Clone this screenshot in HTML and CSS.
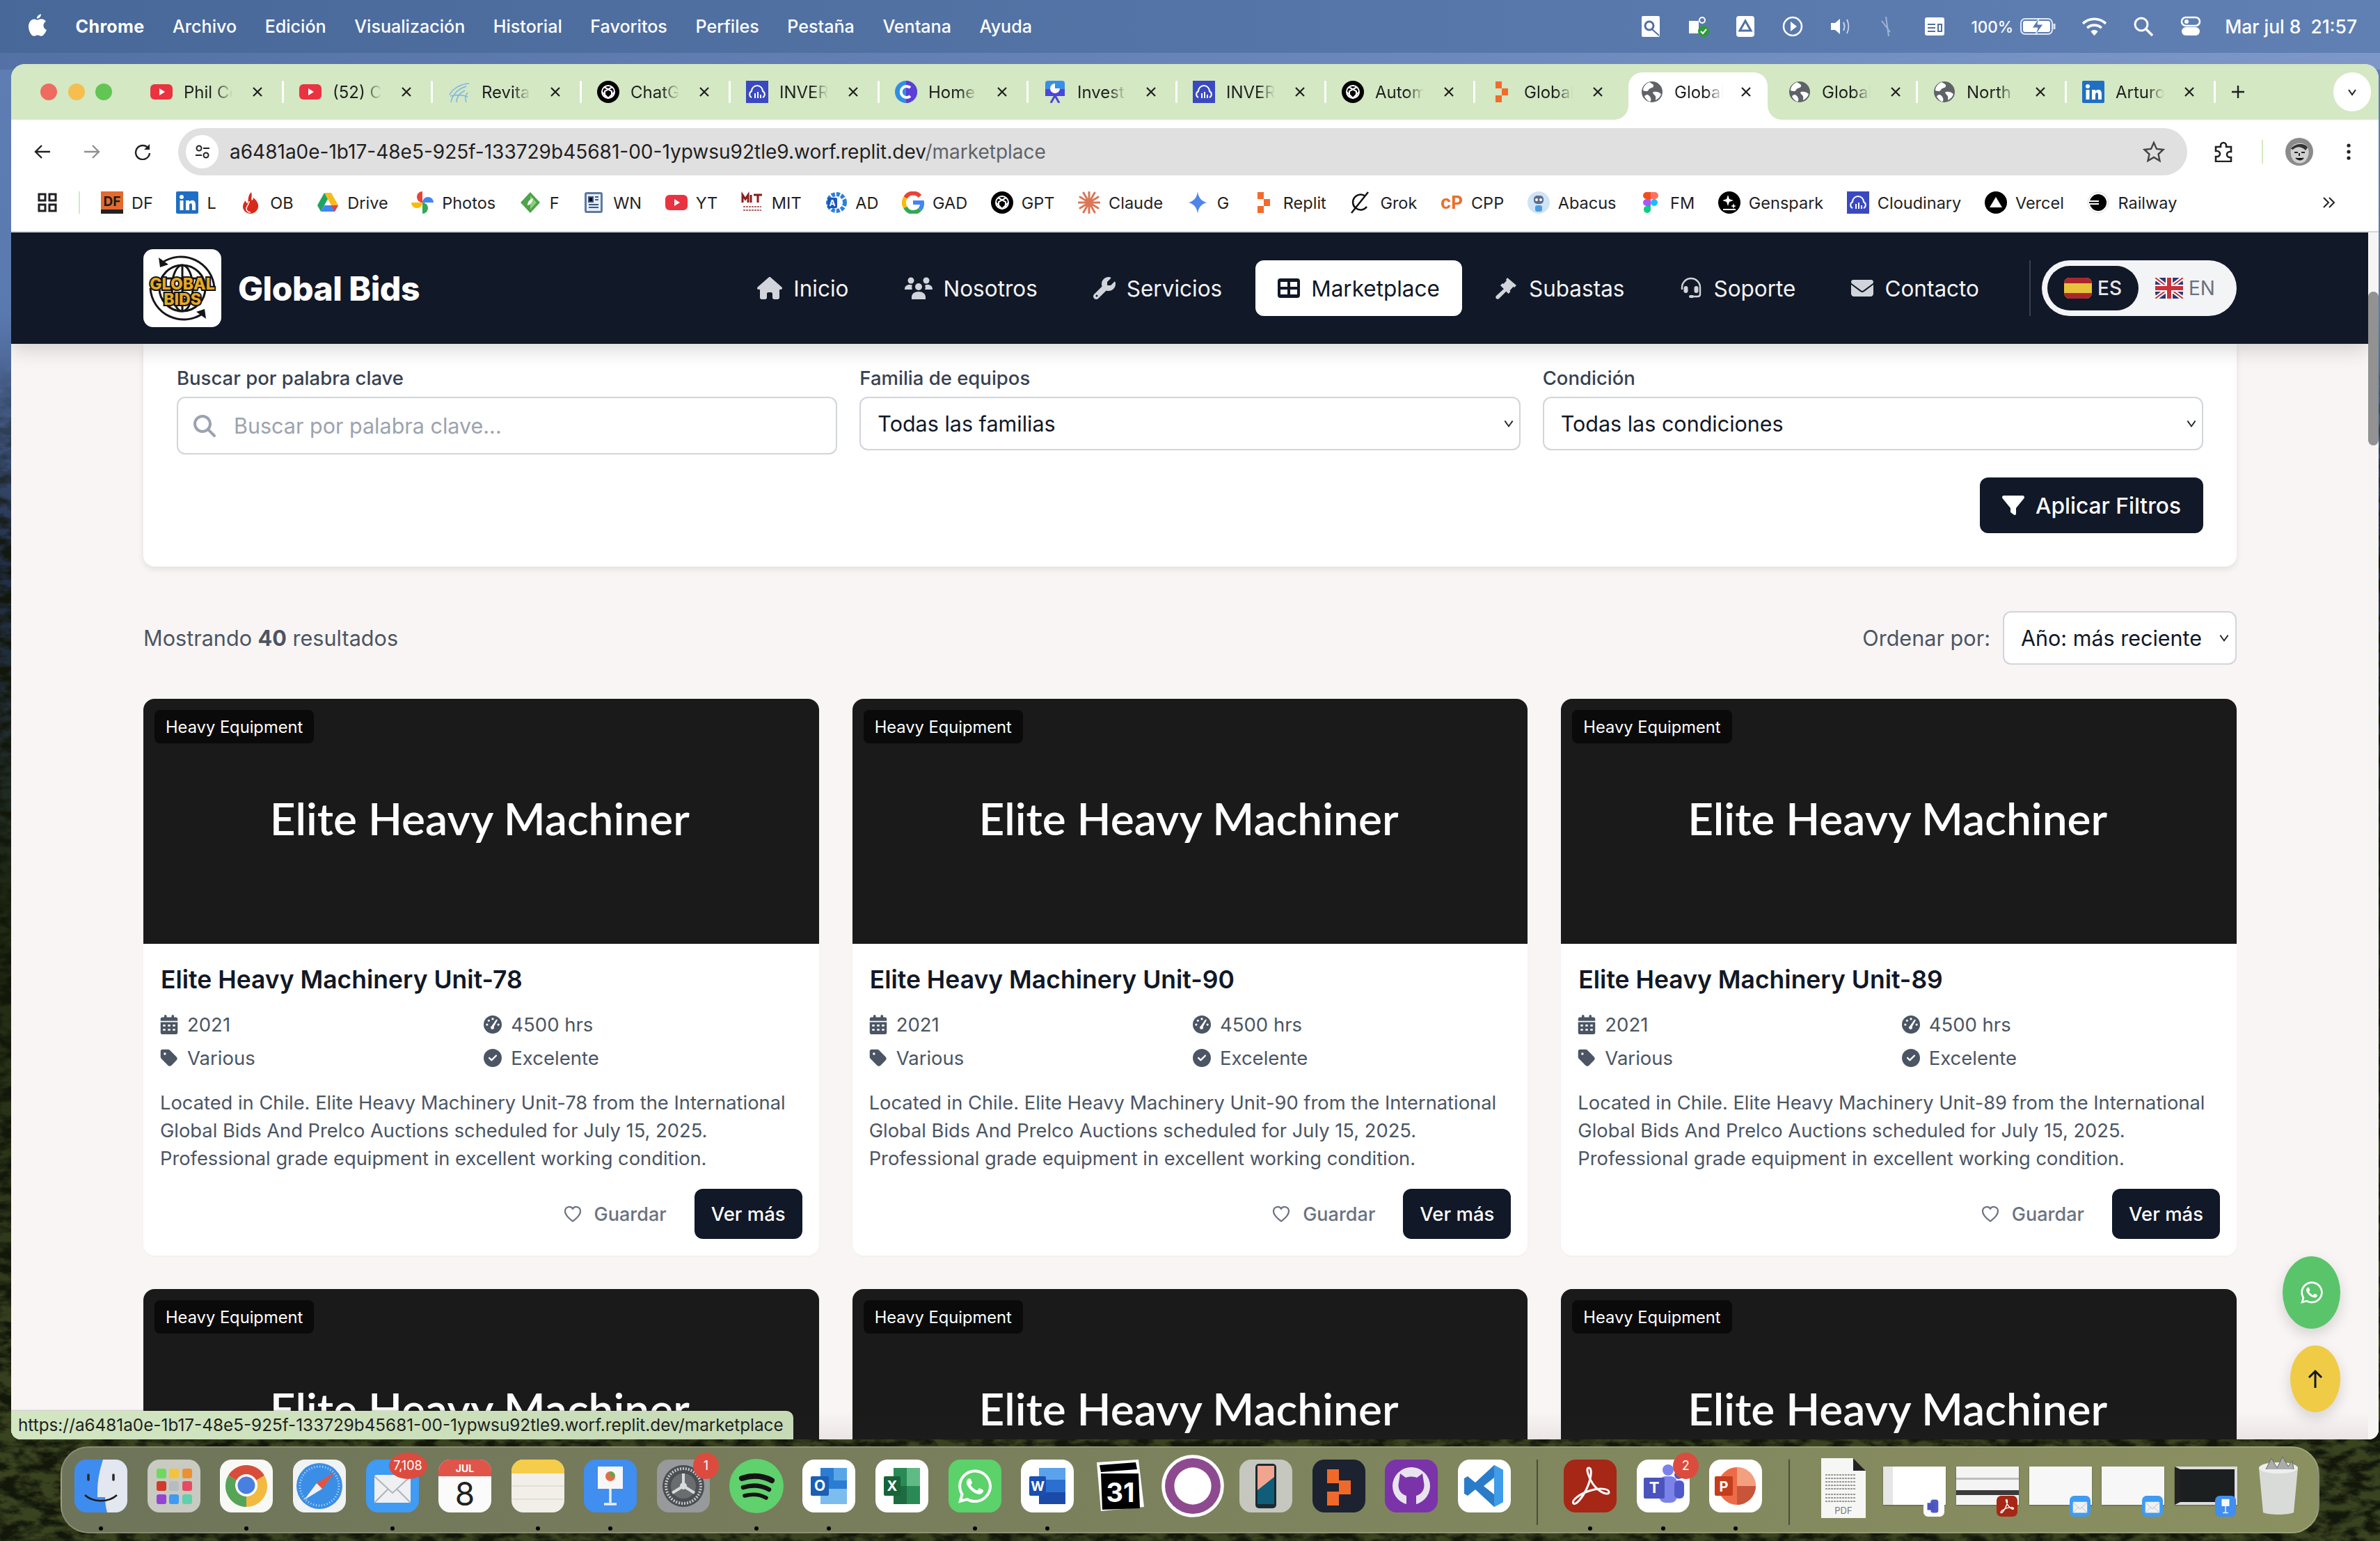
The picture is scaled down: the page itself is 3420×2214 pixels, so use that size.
FILE: index.html
```html
<!DOCTYPE html>
<html lang="es">
<head>
<meta charset="utf-8">
<title>Global Bids - Marketplace</title>
<link rel="stylesheet" href="styles.css">
</head>
<body>
<svg class="defs" width="0" height="0" aria-hidden="true">
<defs>
<filter id="foliage" x="0" y="0" width="100%" height="100%" color-interpolation-filters="sRGB"><feTurbulence type="fractalNoise" baseFrequency="0.035 0.07" numOctaves="5" seed="7"/><feColorMatrix values="0 0 0 0 .07  0 0 0 0 .09  0 0 0 0 .04  3.2 0 0 0 -1.15"/></filter>
<symbol id="i-yt" viewBox="0 0 32 32"><rect y="5" width="32" height="22" rx="6" fill="#ea3340"/><path d="M13 11l8 5-8 5z" fill="#fff"/></symbol>
<symbol id="i-gpt" viewBox="0 0 32 32"><circle cx="16" cy="16" r="16" fill="#000"/><g fill="none" stroke="#fff" stroke-width="2"><circle cx="16" cy="16" r="9"/><path d="M10 9l11 6v8M22 9L11 15v8M7 16l9 9 9-9"/></g></symbol>
<symbol id="i-cloud" viewBox="0 0 32 32"><rect width="32" height="32" fill="#3a49c1"/><path d="M8 24a5 5 0 0 1 0-9 8 8 0 0 1 16 0 5 5 0 0 1 0 9" fill="none" stroke="#fff" stroke-width="2"/><path d="M13 25v-7M17 25v-9M21 25v-5" stroke="#fff" stroke-width="2"/></symbol>
<symbol id="i-revit" viewBox="0 0 32 32"><path d="M2 20C8 10 18 5 30 4M4 31C6 20 14 12 26 8M12 31c0-8 4-13 12-17M26 31c-2-6-2-10 2-14M3 22c8-2 18-2 25 1" fill="none" stroke="#7eb4e8" stroke-width="1.5"/></symbol>
<symbol id="i-chome" viewBox="0 0 32 32"><circle cx="16" cy="16" r="16" fill="#2f8fe4"/><path d="M16 0a16 16 0 0 1 0 32z" fill="#5b3fd6"/><path d="M22 10a8 8 0 1 0 0 12" fill="none" stroke="#fff" stroke-width="4"/></symbol>
<symbol id="i-invest" viewBox="0 0 32 32"><rect x="2" width="28" height="22" rx="4" fill="#3b8ee8"/><rect x="2" y="12" width="28" height="10" fill="#4b46d8"/><path d="M16 4a7 7 0 1 0 7 7h-7z" fill="#fff"/><path d="M10 32l5-9h2l5 9" fill="none" stroke="#4b46d8" stroke-width="3"/></symbol>
<symbol id="i-globe" viewBox="0 0 32 32"><circle cx="16" cy="16" r="15" fill="#5f6368"/><path d="M12 2c3 2 7 3 6 6s-6 2-7 5-5 2-8 1c0-5 4-10 9-12zM18 16c4-1 8 0 11 3-1 4-4 7-8 9 0-3 1-5-1-7s-4-4-2-5zM8 20c3 0 5 2 6 5s0 4-1 5c-4-1-7-5-8-8z" fill="#fff"/></symbol>
<symbol id="i-replit" viewBox="0 0 32 32"><path d="M7 1h9v10H7zM16 11h9v10h-9zM7 21h9v10H7z" fill="#f26b2c"/></symbol>
<symbol id="i-li" viewBox="0 0 32 32"><rect width="32" height="32" rx="2" fill="#1f6fc4"/><circle cx="8" cy="8" r="3" fill="#fff"/><path d="M5.500 13h5v14h-5zM14 13h5v2c3-4 9-3 9 4v8h-5v-7c0-4-4-4-4 0v7h-5z" fill="#fff"/></symbol>
<symbol id="i-df" viewBox="0 0 32 32"><rect width="32" height="32" fill="#e46a2e"/><rect y="26" width="32" height="6" fill="#222"/><text x="16" y="21" text-anchor="middle" class="svg-t" font-size="19" fill="#1a1a1a">DF</text></symbol>
<symbol id="i-ob" viewBox="0 0 32 32"><path d="M17 1c2 7-1 9 1 12 2-1 2-3 2-4 5 4 8 9 7 14-1 5-6 9-11 9S5 28 5 22c0-4 2-7 4-9 0 2 1 4 3 4 1-6 0-11 5-16z" fill="#d8291d"/><path d="M14 14c0 5-4 7-4 11 0 3 3 5 6 5" fill="none" stroke="#fff" stroke-width="1.500"/></symbol>
<symbol id="i-drive" viewBox="0 0 32 32"><path d="M11 2h10l10 18h-10z" fill="#f6bc1d"/><path d="M11 2L1 20l5 9 10-18z" fill="#1da462"/><path d="M6 29h20l5-9H11z" fill="#4285f4"/><path d="M21 20l5 9 5-9z" fill="#ea4335"/></symbol>
<symbol id="i-photos" viewBox="0 0 32 32"><path d="M16 16A8 8 0 0 1 16 0z" fill="#ea4335"/><path d="M16 16a8 8 0 0 1 16 0z" fill="#4285f4"/><path d="M16 16a8 8 0 0 1 0 16z" fill="#34a853"/><path d="M16 16a8 8 0 0 1-16 0z" fill="#fbbc04"/></symbol>
<symbol id="i-f" viewBox="0 0 32 32"><path d="M16 1L30 16 16 31 2 16z" fill="#4da34a"/><path d="M16 6l9 10-9 10" fill="#8bcf78"/><path d="M12 20c0-6 4-9 8-10-1 5-3 9-8 10z" fill="#fff"/></symbol>
<symbol id="i-wn" viewBox="0 0 32 32"><rect x="3" y="1" width="26" height="30" rx="3" fill="#5d7ba3"/><rect x="6" y="4" width="20" height="24" fill="#e8eef5"/><path d="M9 8h6v7H9zM18 8h5M18 12h5M9 19h14M9 23h14" stroke="#3d5a82" stroke-width="2"/></symbol>
<symbol id="i-mit" viewBox="0 0 32 32"><path d="M2 16V5l4 6 4-6v11M14 5v11M18 5h12M24 5v11" fill="none" stroke="#8a1c1c" stroke-width="3"/><path d="M3 22h26M3 27h26" stroke="#b06a6a" stroke-width="2" stroke-dasharray="3 1"/></symbol>
<symbol id="i-ad" viewBox="0 0 32 32"><circle cx="17" cy="16" r="12" fill="none" stroke="#2f7fd9" stroke-width="6" stroke-dasharray="5 2"/><rect x="4" y="9" width="14" height="15" rx="2" fill="#1d56b8"/><text x="11" y="21" text-anchor="middle" class="svg-t" font-size="12" fill="#fff">A</text></symbol>
<symbol id="i-g" viewBox="0 0 32 32"><g fill="none" stroke-width="6"><path d="M26 7A13 13 0 0 0 5 9" stroke="#ea4335"/><path d="M5 9a13 13 0 0 0 0 14" stroke="#fbbc04"/><path d="M5 23a13 13 0 0 0 21 3" stroke="#34a853"/><path d="M26 26a13 13 0 0 0 3-10H16" stroke="#4285f4"/></g></symbol>
<symbol id="i-claude" viewBox="0 0 32 32"><g stroke="#d97757" stroke-width="3" stroke-linecap="round"><path d="M16 1v30M3 8l26 16M29 8L3 24M8 2l16 28M24 2L8 30M1 16h30"/></g></symbol>
<symbol id="i-gem" viewBox="0 0 32 32"><path d="M16 0c1 9 6 15 14 16-8 1-13 7-14 16-1-9-6-15-14-16 8-1 13-7 14-16z" fill="#4c86e8"/></symbol>
<symbol id="i-grok" viewBox="0 0 32 32"><path d="M23 7a11 11 0 1 0 2 15M27 1L3 31" fill="none" stroke="#111" stroke-width="2.500"/></symbol>
<symbol id="i-cpp" viewBox="0 0 32 32"><text x="16" y="25" text-anchor="middle" class="svg-t" font-size="26" fill="#e8702a">cP</text></symbol>
<symbol id="i-abacus" viewBox="0 0 32 32"><circle cx="16" cy="16" r="16" fill="#cfe3f7"/><rect x="9" y="6" width="14" height="12" rx="5" fill="#5b6b8c"/><circle cx="13" cy="12" r="2" fill="#fff"/><circle cx="19" cy="12" r="2" fill="#fff"/><rect x="11" y="20" width="10" height="9" rx="3" fill="#4b9ce2"/></symbol>
<symbol id="i-figma" viewBox="0 0 32 32"><path d="M10 1h6v10h-6a5 5 0 0 1 0-10z" fill="#f24e1e"/><path d="M16 1h6a5 5 0 0 1 0 10h-6z" fill="#ff7262"/><path d="M10 11h6v10h-6a5 5 0 0 1 0-10z" fill="#a259ff"/><circle cx="21" cy="16" r="5" fill="#1abcfe"/><path d="M10 21h6v5a5 5 0 1 1-6-5z" fill="#0acf83"/></symbol>
<symbol id="i-spark" viewBox="0 0 32 32"><circle cx="16" cy="16" r="16" fill="#000"/><path d="M14 5l2 6 6 2-6 2-2 6-2-6-6-2 6-2zM22 17l1 3 3 1-3 1-1 3-1-3-3-1 3-1z" fill="#fff"/><rect x="7" y="25" width="18" height="2" fill="#fff"/></symbol>
<symbol id="i-vercel" viewBox="0 0 32 32"><circle cx="16" cy="16" r="16" fill="#000"/><path d="M16 8l9 15H7z" fill="#fff"/></symbol>
<symbol id="i-rail" viewBox="0 0 32 32"><circle cx="16" cy="16" r="15" fill="#fff" stroke="#ddd"/><path d="M16 4a12 12 0 0 1 0 24c-6 0-10-4-12-9h13v-2H3v-2h14v-2H4C6 8 10 4 16 4z" fill="#000"/></symbol>
<symbol id="x" viewBox="0 0 16 16"><path d="M2 2l12 12M14 2L2 14" stroke="#1f1f1f" stroke-width="2.200"/></symbol>
<symbol id="calendar" viewBox="0 0 448 512"><path fill-rule="evenodd" d="M128 0c17.700 0 32 14.300 32 32v32h128V32c0-17.700 14.300-32 32-32s32 14.300 32 32v32h48c26.500 0 48 21.500 48 48v48H0v-48c0-26.500 21.500-48 48-48h48V32c0-17.700 14.300-32 32-32zM0 192h448v272c0 26.500-21.500 48-48 48H48c-26.500 0-48-21.500-48-48zM64 256v48h64v-48zm128 0v48h64v-48zm128 0v48h64v-48zM64 368v48h64v-48zm128 0v48h64v-48zm128 0v48h64v-48z"/></symbol>
<symbol id="gauge" viewBox="0 0 512 512"><path fill-rule="evenodd" d="M256 0a256 256 0 1 1 0 512 256 256 0 1 1 0-512zM256 64a32 32 0 1 0 0 64 32 32 0 1 0 0-64zM144 112a32 32 0 1 0 0 64 32 32 0 1 0 0-64zM96 224a32 32 0 1 0 0 64 32 32 0 1 0 0-64zM416 224a32 32 0 1 0 0 64 32 32 0 1 0 0-64zM352 120L224 300a48 48 0 1 0 64 20l100-180c8-22-20-36-36-20z"/></symbol>
<symbol id="tag" viewBox="0 0 448 512"><path d="M0 80V229.500c0 17 6.700 33.300 18.700 45.300l176 176c25 25 65.500 25 90.500 0L418.700 317.300c25-25 25-65.500 0-90.500l-176-176c-12-12-28.300-18.700-45.300-18.700H48C21.500 32 0 53.500 0 80zm112 32a32 32 0 1 1 0 64 32 32 0 1 1 0-64z"/></symbol>
<symbol id="check" viewBox="0 0 512 512"><path d="M256 512A256 256 0 1 0 256 0a256 256 0 1 0 0 512zM369 209L241 337c-9.400 9.400-24.600 9.400-33.900 0l-64-64c-9.400-9.400-9.400-24.600 0-33.900s24.600-9.400 33.900 0l47 47L335 175c9.400-9.400 24.600-9.400 33.900 0s9.400 24.600 0 33.900z"/></symbol>
<symbol id="heart" viewBox="0 0 28 28"><path d="M14 24.500S3 17.500 3 10a6 6 0 0 1 11-3.300A6 6 0 0 1 25 10c0 7.500-11 14.500-11 14.500z" fill="none" stroke="#6b7280" stroke-width="2.200"/></symbol>
<symbol id="chev" viewBox="0 0 16 16"><path d="M3 5l5 7 5-7" fill="none" stroke="#222" stroke-width="1.600"/></symbol>
<symbol id="wa" viewBox="0 0 448 512"><path d="M380.900 97.100C339 55.100 283.200 32 223.900 32c-122.400 0-222 99.600-222 222 0 39.100 10.200 77.300 29.600 111L0 480l117.700-30.900c32.400 17.700 68.900 27 106.100 27h.1c122.300 0 224.100-99.600 224.100-222 0-59.300-25.200-115-67.100-157zm-157 341.600c-33.200 0-65.700-8.900-94-25.700l-6.700-4-69.800 18.300L72 359.200l-4.400-7c-18.500-29.400-28.200-63.300-28.200-98.200 0-101.700 82.800-184.500 184.600-184.500 49.300 0 95.600 19.200 130.400 54.100 34.800 34.900 56.200 81.200 56.100 130.500 0 101.800-84.900 184.600-186.600 184.600zm101.200-138.200c-5.500-2.800-32.800-16.200-37.900-18-5.100-1.900-8.800-2.800-12.500 2.800-3.700 5.600-14.300 18-17.600 21.800-3.200 3.700-6.500 4.200-12 1.400-32.600-16.300-54-29.100-75.500-66-5.700-9.800 5.700-9.100 16.300-30.300 1.800-3.700.9-6.900-.5-9.700-1.400-2.800-12.500-30.100-17.100-41.200-4.500-10.800-9.100-9.300-12.500-9.500-3.200-.2-6.900-.2-10.600-.2-3.700 0-9.700 1.400-14.800 6.900-5.100 5.600-19.400 19-19.400 46.300 0 27.300 19.900 53.700 22.600 57.400 2.800 3.700 39.100 59.700 94.800 83.800 35.200 15.200 49 16.500 66.600 13.900 10.700-1.600 32.800-13.400 37.400-26.400 4.600-13 4.600-24.100 3.200-26.400-1.300-2.500-5-3.900-10.500-6.600z"/></symbol>
<symbol id="d-mail" viewBox="0 0 76 76"><rect width="76" height="76" rx="17" fill="#3f9bf3"/><rect x="12" y="22" width="52" height="40" rx="3" fill="#eef0f2"/><path d="M12 24l26 24 26-24M12 62l20-20M64 62L44 42" fill="none" stroke="#aeb4bb" stroke-width="2"/></symbol>
</defs>
</svg>

<div class="desktop">
  <div class="wall"><svg class="wall-noise" width="3420" height="1700"><rect width="3420" height="1700" filter="url(#foliage)"/></svg></div>

  <header class="menubar">
    <nav class="menu-left">
      <svg class="apple" viewBox="0 0 24 28"><path fill="#fff" d="M16 0c.3 2.700-2.300 6-5.300 5.700C10.300 3 13 .3 16 0zM11 7.500c1.400 0 3-1.300 5.400-1.300 2.400 0 4.500 1.200 5.800 3.100-4.700 2.800-3.800 9.100.9 11-1.500 3.600-4 7.700-6.700 7.700-1.900 0-2.500-1.200-4.800-1.200s-3 1.200-4.800 1.200C3.300 28 0 21 0 16 0 10.500 3.500 6.500 7.300 6.500c1.600 0 2.700 1 3.700 1z"/></svg>
      <span class="menu-item menu-app">Chrome</span><span class="menu-item">Archivo</span><span class="menu-item">Edición</span><span class="menu-item">Visualización</span><span class="menu-item">Historial</span><span class="menu-item">Favoritos</span><span class="menu-item">Perfiles</span><span class="menu-item">Pestaña</span><span class="menu-item">Ventana</span><span class="menu-item">Ayuda</span>
    </nav>
    <div class="menu-right">
      <svg class="mi" viewBox="0 0 32 32"><rect x="3" y="1" width="26" height="30" rx="2" fill="#fff"/><circle cx="14" cy="15" r="6" fill="none" stroke="#4f6fa5" stroke-width="3"/><path d="M18 20l10 9" stroke="#4f6fa5" stroke-width="2"/></svg>
      <svg class="mi" viewBox="0 0 32 32"><path d="M3 8h14v18H3z" fill="#fff"/><circle cx="22" cy="7" r="4" fill="none" stroke="#fff" stroke-width="2"/><circle cx="24" cy="23" r="8" fill="#2e9a3c"/><path d="M20 23l3 3 5-6" fill="none" stroke="#fff" stroke-width="2"/></svg>
      <svg class="mi" viewBox="0 0 32 32"><rect x="3" y="1" width="26" height="30" rx="4" fill="#fff"/><path d="M16 8l8 14H8z" fill="none" stroke="#4f6fa5" stroke-width="3"/></svg>
      <svg class="mi" viewBox="0 0 32 32"><circle cx="16" cy="16" r="13" fill="none" stroke="#fff" stroke-width="2.500"/><path d="M13 9l9 7-9 7z" fill="#fff"/></svg>
      <svg class="mi" viewBox="0 0 32 32"><path d="M3 11h6l7-6v22l-7-6H3z" fill="#fff"/><path d="M21 10c2 4 2 8 0 12M26 6c3 6 3 14 0 20" fill="none" stroke="#c9d4e8" stroke-width="2"/></svg>
      <svg class="mi" viewBox="0 0 32 32"><path d="M8 8l12 16M14 2l4 28" stroke="#9fb2d2" stroke-width="2"/></svg>
      <svg class="mi" viewBox="0 0 32 32"><rect x="2" y="3" width="28" height="26" rx="3" fill="#fff"/><path d="M6 13h11M6 18h11M6 23h11M21 13h5v10h-5z" stroke="#4f6fa5" stroke-width="2" fill="none"/></svg>
      <span class="menu-pct">100%</span>
      <svg class="batt" viewBox="0 0 52 26"><rect x="1" y="2" width="45" height="22" rx="6" fill="none" stroke="#dfe6f2" stroke-width="2"/><rect x="4" y="5" width="39" height="16" rx="3" fill="#fff"/><path d="M49 9v8" stroke="#dfe6f2" stroke-width="3"/><path d="M27 1l-10 14h8l-3 10 11-15h-8z" fill="#5a78ad" stroke="#fff"/></svg>
      <svg class="wifi" viewBox="0 0 36 28"><path d="M2 10a23 23 0 0 1 32 0M8 16a15 15 0 0 1 20 0" fill="none" stroke="#fff" stroke-width="3.500"/><path d="M13 21a7 7 0 0 1 10 0l-5 6z" fill="#fff"/></svg>
      <svg class="mi" viewBox="0 0 32 32"><circle cx="13" cy="13" r="9" fill="none" stroke="#fff" stroke-width="3"/><path d="M20 20l9 9" stroke="#fff" stroke-width="3.500"/></svg>
      <svg class="mi" viewBox="0 0 32 32"><rect x="3" y="3" width="26" height="12" rx="6" fill="none" stroke="#fff" stroke-width="2.500"/><rect x="3" y="17" width="26" height="12" rx="6" fill="#fff"/><circle cx="10" cy="9" r="3" fill="#fff"/></svg>
      <span class="menu-clock">Mar jul 8&nbsp;&nbsp;21:57</span>
    </div>
  </header>

  <main class="window">
    <div class="tabstrip">
      <div class="lights"><i class="light red"></i><i class="light amber"></i><i class="light green"></i></div>
      <div class="tab"><svg class="fav"><use href="#i-yt"/></svg><span class="tab-title">Phil Coulson</span><svg class="tab-x"><use href="#x"/></svg></div>
      <div class="tab"><svg class="fav"><use href="#i-yt"/></svg><span class="tab-title">(52) Con</span><svg class="tab-x"><use href="#x"/></svg></div>
      <div class="tab"><svg class="fav"><use href="#i-revit"/></svg><span class="tab-title">Revitalize</span><svg class="tab-x"><use href="#x"/></svg></div>
      <div class="tab"><svg class="fav"><use href="#i-gpt"/></svg><span class="tab-title">ChatGPT</span><svg class="tab-x"><use href="#x"/></svg></div>
      <div class="tab"><svg class="fav"><use href="#i-cloud"/></svg><span class="tab-title">INVERSION</span><svg class="tab-x"><use href="#x"/></svg></div>
      <div class="tab"><svg class="fav"><use href="#i-chome"/></svg><span class="tab-title">Home</span><svg class="tab-x"><use href="#x"/></svg></div>
      <div class="tab"><svg class="fav"><use href="#i-invest"/></svg><span class="tab-title">Investor</span><svg class="tab-x"><use href="#x"/></svg></div>
      <div class="tab"><svg class="fav"><use href="#i-cloud"/></svg><span class="tab-title">INVERSION</span><svg class="tab-x"><use href="#x"/></svg></div>
      <div class="tab"><svg class="fav"><use href="#i-gpt"/></svg><span class="tab-title">Automation</span><svg class="tab-x"><use href="#x"/></svg></div>
      <div class="tab tab-nosep"><svg class="fav"><use href="#i-replit"/></svg><span class="tab-title">Global Bids</span><svg class="tab-x"><use href="#x"/></svg></div>
      <div class="tab tab-active"><svg class="fav"><use href="#i-globe"/></svg><span class="tab-title">Global Bids</span><svg class="tab-x"><use href="#x"/></svg></div>
      <div class="tab tab-next"><svg class="fav"><use href="#i-globe"/></svg><span class="tab-title">Global Bids</span><svg class="tab-x"><use href="#x"/></svg></div>
      <div class="tab"><svg class="fav"><use href="#i-globe"/></svg><span class="tab-title">North Star</span><svg class="tab-x"><use href="#x"/></svg></div>
      <div class="tab"><svg class="fav"><use href="#i-li"/></svg><span class="tab-title">Arturo Perez</span><svg class="tab-x"><use href="#x"/></svg></div>
      <svg class="tab-plus" viewBox="0 0 20 20"><path d="M10 1v18M1 10h18" stroke="#1f1f1f" stroke-width="2.400"/></svg>
      <div class="tab-menu"><svg class="tab-menu-chev" viewBox="0 0 16 16"><path d="M3 5l5 7 5-7" fill="none" stroke="#1f1f1f" stroke-width="2"/></svg></div>
    </div>

    <div class="toolbar">
      <svg class="tb-icon" viewBox="0 0 24 24"><path d="M23 12H3M11 3l-9 9 9 9" fill="none" stroke="#202124" stroke-width="2.400"/></svg>
      <svg class="tb-icon tb-fwd" viewBox="0 0 24 24"><path d="M1 12h20M13 3l9 9-9 9" fill="none" stroke="#8e9092" stroke-width="2.400"/></svg>
      <svg class="tb-icon tb-reload" viewBox="0 0 24 24"><path d="M20 7a10 10 0 1 0 2 7" fill="none" stroke="#202124" stroke-width="2.400"/><path d="M22 1v8h-8z" fill="#202124"/></svg>
      <div class="omnibox">
        <span class="site-info"><svg class="site-icon" viewBox="0 0 24 24"><circle cx="7" cy="7" r="3.500" fill="none" stroke="#202124" stroke-width="2"/><path d="M13 7h9M2 17h9" stroke="#202124" stroke-width="2"/><circle cx="17" cy="17" r="3.500" fill="none" stroke="#202124" stroke-width="2"/></svg></span>
        <span class="url">a6481a0e-1b17-48e5-925f-133729b45681-00-1ypwsu92tle9.worf.replit.dev<span class="url-path">/marketplace</span></span>
        <svg class="star" viewBox="0 0 32 32"><path d="M16 3l4 9 9.500 1-7 6.500 2 9.500-8.500-5-8.500 5 2-9.500-7-6.500L12 12z" fill="none" stroke="#444" stroke-width="2.400"/></svg>
      </div>
      <svg class="tb-ext" viewBox="0 0 30 30"><path d="M4 8h7V6a4 4 0 0 1 8 0v2h7v7h-2a4 4 0 0 0 0 8h2v6H4v-7h2a4 4 0 0 0 0-8H4z" fill="none" stroke="#202124" stroke-width="2.600"/></svg>
      <i class="tb-div"></i>
      <svg class="avatar" viewBox="0 0 40 40"><circle cx="20" cy="20" r="20" fill="#8b8b8b"/><path d="M8 16c2-10 22-12 25 0 2 7-1 14-5 18-6 4-12 3-16-1-4-4-5-11-4-17z" fill="#d0d0d0"/><path d="M8 16c4-8 20-10 24-2l-3 4c-6-6-13-6-18-1z" fill="#333"/><path d="M13 21h5M23 21h5M15 29c4 3 8 3 11 0M20 22v4" stroke="#222" stroke-width="2"/></svg>
      <svg class="tb-dots" viewBox="0 0 6 24"><circle cx="3" cy="3" r="2.600" fill="#202124"/><circle cx="3" cy="12" r="2.600" fill="#202124"/><circle cx="3" cy="21" r="2.600" fill="#202124"/></svg>
    </div>

    <div class="bookmarks">
      <svg class="bm-apps" viewBox="0 0 28 28"><path d="M2 2h9v9H2zM17 2h9v9h-9zM2 17h9v9H2zM17 17h9v9h-9z" fill="none" stroke="#202124" stroke-width="3"/></svg>
      <i class="bm-div"></i>
      <div class="bm-list">
        <span class="bm"><svg class="bm-i"><use href="#i-df"/></svg>DF</span>
        <span class="bm"><svg class="bm-i"><use href="#i-li"/></svg>L</span>
        <span class="bm"><svg class="bm-i"><use href="#i-ob"/></svg>OB</span>
        <span class="bm"><svg class="bm-i"><use href="#i-drive"/></svg>Drive</span>
        <span class="bm"><svg class="bm-i"><use href="#i-photos"/></svg>Photos</span>
        <span class="bm"><svg class="bm-i"><use href="#i-f"/></svg>F</span>
        <span class="bm"><svg class="bm-i"><use href="#i-wn"/></svg>WN</span>
        <span class="bm"><svg class="bm-i"><use href="#i-yt"/></svg>YT</span>
        <span class="bm"><svg class="bm-i"><use href="#i-mit"/></svg>MIT</span>
        <span class="bm"><svg class="bm-i"><use href="#i-ad"/></svg>AD</span>
        <span class="bm"><svg class="bm-i"><use href="#i-g"/></svg>GAD</span>
        <span class="bm"><svg class="bm-i"><use href="#i-gpt"/></svg>GPT</span>
        <span class="bm"><svg class="bm-i"><use href="#i-claude"/></svg>Claude</span>
        <span class="bm"><svg class="bm-i"><use href="#i-gem"/></svg>G</span>
        <span class="bm"><svg class="bm-i"><use href="#i-replit"/></svg>Replit</span>
        <span class="bm"><svg class="bm-i"><use href="#i-grok"/></svg>Grok</span>
        <span class="bm"><svg class="bm-i"><use href="#i-cpp"/></svg>CPP</span>
        <span class="bm"><svg class="bm-i"><use href="#i-abacus"/></svg>Abacus</span>
        <span class="bm"><svg class="bm-i"><use href="#i-figma"/></svg>FM</span>
        <span class="bm"><svg class="bm-i"><use href="#i-spark"/></svg>Genspark</span>
        <span class="bm"><svg class="bm-i"><use href="#i-cloud"/></svg>Cloudinary</span>
        <span class="bm"><svg class="bm-i"><use href="#i-vercel"/></svg>Vercel</span>
        <span class="bm"><svg class="bm-i"><use href="#i-rail"/></svg>Railway</span>
      </div>
      <svg class="bm-more" viewBox="0 0 20 20"><path d="M3 3l7 7-7 7M11 3l7 7-7 7" fill="none" stroke="#202124" stroke-width="2"/></svg>
    </div>

    <div class="viewport">
      <div class="page">
        <nav class="topnav">
          <div class="brand">
            <div class="logo">
              <svg class="logo-svg" viewBox="0 0 112 112">
                <g fill="none" stroke="#151515" stroke-width="3">
                  <circle cx="56" cy="56" r="33"/><ellipse cx="56" cy="56" rx="15" ry="33"/><path d="M56 23v66M26 42h60M26 72h60"/>
                  <path d="M26 20A48 48 0 0 1 102 56M86 92A48 48 0 0 1 10 56"/>
                </g>
                <path d="M22 12L24 26 36 22zM90 100L88 86 76 90z" fill="#151515"/>
                <text x="56" y="58" text-anchor="middle" class="logo-t">GLOBAL</text>
                <text x="56" y="80" text-anchor="middle" class="logo-t">BIDS</text>
              </svg>
            </div>
            <span class="brand-name">Global Bids</span>
          </div>
          <div class="nav-links">
            <a class="nav-link"><svg class="nav-i nav-i-home" viewBox="0 0 576 512"><path d="M575.800 255.500c0 18-15 32.100-32 32.100h-32l.7 160.200c0 2.700-.2 5.400-.5 8.100V472c0 22.100-17.900 40-40 40H456c-1.100 0-2.200 0-3.300-.1c-1.400 .1-2.800 .1-4.200 .1H416 392c-22.100 0-40-17.900-40-40V448 384c0-17.700-14.300-32-32-32H256c-17.700 0-32 14.300-32 32v64 24c0 22.100-17.900 40-40 40H160 128.100c-1.500 0-3-.1-4.500-.2c-1.200 .1-2.400 .2-3.600 .2H104c-22.100 0-40-17.900-40-40V360c0-.9 0-1.900 .1-2.800V287.600H32c-18 0-32-14-32-32.100c0-9 3-17 10-24L266.400 8c7-7 15-8 22-8s15 2 21 7L564.800 231.500c8 7 12 15 11 24z"/></svg>Inicio</a>
            <a class="nav-link"><svg class="nav-i nav-i-users" viewBox="0 0 40 32"><circle cx="9" cy="5" r="4.500"/><circle cx="31" cy="5" r="4.500"/><circle cx="20" cy="14" r="5"/><path d="M0 18c0-5 3-7 7-7 2 0 3 .5 4 1-1 2-1 4 0 6zM40 18c0-5-3-7-7-7-2 0-3 .5-4 1 1 2 1 4 0 6zM10 32v-3c0-5 4-8 10-8s10 3 10 8v3z"/></svg>Nosotros</a>
            <a class="nav-link"><svg class="nav-i" viewBox="0 0 512 512"><path d="M352 320c88.400 0 160-71.600 160-160c0-15.300-2.200-30.100-6.200-44.200c-3.100-10.800-16.400-13.200-24.300-5.300l-76.800 76.800c-3 3-7.100 4.700-11.300 4.700H336c-8.800 0-16-7.200-16-16V118.600c0-4.200 1.700-8.300 4.700-11.300l76.800-76.800c7.900-7.900 5.400-21.200-5.300-24.300C382.100 2.200 367.300 0 352 0C263.600 0 192 71.600 192 160c0 19.100 3.400 37.500 9.500 54.500L19.900 396.100C7.200 408.800 0 426.100 0 444.100C0 481.600 30.400 512 67.900 512c18 0 35.300-7.200 48-19.900L297.500 310.500c17 6.200 35.400 9.500 54.500 9.500zM80 408a24 24 0 1 1 0 48 24 24 0 1 1 0-48z"/></svg>Servicios</a>
            <a class="nav-link nav-active"><svg class="nav-i" viewBox="0 0 32 32"><path fill-rule="evenodd" d="M4 2h24a4 4 0 0 1 4 4v20a4 4 0 0 1-4 4H4a4 4 0 0 1-4-4V6a4 4 0 0 1 4-4zM4 7v7h10V7zM18 7v7h10V7zM4 18v7h10v-7zM18 18v7h10v-7z"/></svg>Marketplace</a>
            <a class="nav-link"><svg class="nav-i" viewBox="0 0 32 32"><path d="M17 1l13 11-3 3-1.500-1-5 5.500 1 1.500-3 3L7 12l3-3 1.500 1L16 5l-1-1zM12 17l3.500 3.500L5 31c-1 1-3 1-4 0s-1-3 0-4z"/></svg>Subastas</a>
            <a class="nav-link"><svg class="nav-i" viewBox="0 0 32 32"><path d="M3 18v-3a13 13 0 0 1 26 0v10c0 2-2 3-4 3h-8" fill="none" stroke="currentColor" stroke-width="2.400"/><rect x="5.500" y="13" width="6" height="10" rx="3"/><rect x="20.500" y="13" width="6" height="10" rx="3"/><rect x="13" y="26" width="7" height="4" rx="2"/></svg>Soporte</a>
            <a class="nav-link"><svg class="nav-i" viewBox="0 0 512 512"><path d="M48 64C21.500 64 0 85.500 0 112c0 15.100 7.100 29.300 19.200 38.400L236.800 313.600c11.400 8.500 27 8.500 38.400 0L492.800 150.400c12.100-9.100 19.200-23.300 19.200-38.400c0-26.500-21.500-48-48-48H48zM0 176V384c0 35.300 28.700 64 64 64H448c35.300 0 64-28.700 64-64V176L294.400 339.200c-22.800 17.100-54 17.100-76.800 0L0 176z"/></svg>Contacto</a>
          </div>
          <i class="nav-div"></i>
          <div class="lang">
            <span class="lang-opt lang-on"><svg class="flag" viewBox="0 0 40 30"><rect width="40" height="30" rx="8" fill="#e8c23a"/><path d="M0 8a8 8 0 0 1 8-8h24a8 8 0 0 1 8 8zM0 22h40a8 8 0 0 1-8 8H8a8 8 0 0 1-8-8z" fill="#a9272c"/></svg>ES</span>
            <span class="lang-opt"><svg class="flag" viewBox="0 0 40 30"><rect width="40" height="30" rx="8" fill="#2b3a78"/><path d="M0 0l40 30M40 0L0 30" stroke="#fff" stroke-width="6"/><path d="M0 0l40 30M40 0L0 30" stroke="#c8323a" stroke-width="2"/><path d="M20 0v30M0 15h40" stroke="#fff" stroke-width="10"/><path d="M20 0v30M0 15h40" stroke="#c8323a" stroke-width="6"/></svg>EN</span>
          </div>
        </nav>

        <section class="content">
          <form class="filters">
            <div class="filter-grid">
              <label class="field"><span class="field-label">Buscar por palabra clave</span>
                <span class="search-wrap"><input class="search" type="text" placeholder="Buscar por palabra clave..."><svg class="search-i" viewBox="0 0 512 512"><path d="M416 208c0 45.900-14.900 88.300-40 122.700L502.600 457.400c12.500 12.500 12.500 32.800 0 45.300s-32.800 12.500-45.300 0L330.700 376c-34.400 25.200-76.800 40-122.700 40C93.100 416 0 322.900 0 208S93.100 0 208 0S416 93.100 416 208zM208 352a144 144 0 1 0 0-288 144 144 0 1 0 0 288z"/></svg></span>
              </label>
              <label class="field"><span class="field-label">Familia de equipos</span>
                <span class="select-wrap"><select class="select"><option>Todas las familias</option></select><svg class="select-chev"><use href="#chev"/></svg></span>
              </label>
              <label class="field"><span class="field-label">Condición</span>
                <span class="select-wrap"><select class="select"><option>Todas las condiciones</option></select><svg class="select-chev"><use href="#chev"/></svg></span>
              </label>
            </div>
            <div class="filter-actions"><button class="apply" type="button"><svg class="apply-i" viewBox="0 0 512 512"><path d="M3.900 54.900C10.500 40.900 24.500 32 40 32H472c15.500 0 29.500 8.900 36.100 22.900s4.600 30.500-5.200 42.500L320 320.900V448c0 12.100-6.800 23.200-17.700 28.600s-23.800 4.300-33.500-3l-64-48c-8.100-6-12.800-15.500-12.800-25.600V320.900L9 97.300C-.7 85.400-2.800 68.800 3.900 54.900z"/></svg>Aplicar Filtros</button></div>
          </form>

          <div class="results-bar">
            <p class="results-count">Mostrando <b>40</b> resultados</p>
            <div class="sort"><span class="sort-label">Ordenar por:</span><span class="select-wrap sort-wrap"><select class="select"><option>Año: más reciente</option></select><svg class="select-chev sort-chev"><use href="#chev"/></svg></span></div>
          </div>

          <div class="cards">
            <article class="card">
              <div class="card-img"><span class="badge">Heavy Equipment</span><span class="img-title">Elite Heavy Machiner</span></div>
              <div class="card-body">
                <h3 class="card-title">Elite Heavy Machinery Unit-78</h3>
                <div class="meta">
                  <span class="meta-item"><svg class="meta-i"><use href="#calendar"/></svg>2021</span><span class="meta-item"><svg class="meta-i"><use href="#gauge"/></svg>4500 hrs</span>
                  <span class="meta-item"><svg class="meta-i"><use href="#tag"/></svg>Various</span><span class="meta-item"><svg class="meta-i"><use href="#check"/></svg>Excelente</span>
                </div>
                <p class="desc">Located in Chile. Elite Heavy Machinery Unit-78 from the International Global Bids And Prelco Auctions scheduled for July 15, 2025. Professional grade equipment in excellent working condition.</p>
                <div class="card-actions"><span class="save"><svg class="save-i"><use href="#heart"/></svg>Guardar</span><button class="more" type="button">Ver más</button></div>
              </div>
            </article>
            <article class="card">
              <div class="card-img"><span class="badge">Heavy Equipment</span><span class="img-title">Elite Heavy Machiner</span></div>
              <div class="card-body">
                <h3 class="card-title">Elite Heavy Machinery Unit-90</h3>
                <div class="meta">
                  <span class="meta-item"><svg class="meta-i"><use href="#calendar"/></svg>2021</span><span class="meta-item"><svg class="meta-i"><use href="#gauge"/></svg>4500 hrs</span>
                  <span class="meta-item"><svg class="meta-i"><use href="#tag"/></svg>Various</span><span class="meta-item"><svg class="meta-i"><use href="#check"/></svg>Excelente</span>
                </div>
                <p class="desc">Located in Chile. Elite Heavy Machinery Unit-90 from the International Global Bids And Prelco Auctions scheduled for July 15, 2025. Professional grade equipment in excellent working condition.</p>
                <div class="card-actions"><span class="save"><svg class="save-i"><use href="#heart"/></svg>Guardar</span><button class="more" type="button">Ver más</button></div>
              </div>
            </article>
            <article class="card">
              <div class="card-img"><span class="badge">Heavy Equipment</span><span class="img-title">Elite Heavy Machiner</span></div>
              <div class="card-body">
                <h3 class="card-title">Elite Heavy Machinery Unit-89</h3>
                <div class="meta">
                  <span class="meta-item"><svg class="meta-i"><use href="#calendar"/></svg>2021</span><span class="meta-item"><svg class="meta-i"><use href="#gauge"/></svg>4500 hrs</span>
                  <span class="meta-item"><svg class="meta-i"><use href="#tag"/></svg>Various</span><span class="meta-item"><svg class="meta-i"><use href="#check"/></svg>Excelente</span>
                </div>
                <p class="desc">Located in Chile. Elite Heavy Machinery Unit-89 from the International Global Bids And Prelco Auctions scheduled for July 15, 2025. Professional grade equipment in excellent working condition.</p>
                <div class="card-actions"><span class="save"><svg class="save-i"><use href="#heart"/></svg>Guardar</span><button class="more" type="button">Ver más</button></div>
              </div>
            </article>
            <article class="card"><div class="card-img"><span class="badge">Heavy Equipment</span><span class="img-title">Elite Heavy Machiner</span></div></article>
            <article class="card"><div class="card-img"><span class="badge">Heavy Equipment</span><span class="img-title">Elite Heavy Machiner</span></div></article>
            <article class="card"><div class="card-img"><span class="badge">Heavy Equipment</span><span class="img-title">Elite Heavy Machiner</span></div></article>
          </div>
        </section>
        <div class="fabs">
          <span class="fab fab-wa"><svg class="fab-wa-i"><use href="#wa"/></svg></span>
          <span class="fab fab-up"><svg class="fab-up-i" viewBox="0 0 24 28"><path d="M12 27V3M3 12l9-9 9 9" fill="none" stroke="#111827" stroke-width="3"/></svg></span>
        </div>
        <i class="page-fade"></i>
        <div class="status">https://a6481a0e-1b17-48e5-925f-133729b45681-00-1ypwsu92tle9.worf.replit.dev/marketplace</div>
      </div>
      <div class="scrollbar"><i class="scroll-thumb"></i></div>
    </div>
  </main>

  <footer class="dock">
    <span class="di-wrap run"><svg class="di" viewBox="0 0 76 76"><rect width="76" height="76" rx="17" fill="#3e8cf0"/><path d="M41 0h18a17 17 0 0 1 17 17v42a17 17 0 0 1-17 17H47c-2-7-3-15-3-22h-11v-7c0-20 4-34 8-47z" fill="#e2e7f0"/><path d="M20 22v7M56 22v7" stroke="#2a2a2a" stroke-width="3.500" stroke-linecap="round"/><path d="M15 51c12 11 34 11 46 0" fill="none" stroke="#1c1c1c" stroke-width="2.500"/></svg></span>
    <span class="di-wrap"><svg class="di" viewBox="0 0 76 76"><rect width="76" height="76" rx="17" fill="#c9cac1"/><g><rect x="13" y="13" width="14" height="14" rx="3" fill="#6fd95c"/><rect x="31" y="13" width="14" height="14" rx="3" fill="#f4c33c"/><rect x="50" y="13" width="14" height="14" rx="3" fill="#ec9131"/><rect x="13" y="31" width="14" height="14" rx="3" fill="#d23a2c"/><rect x="31" y="31" width="14" height="14" rx="3" fill="#b5bcc2"/><rect x="50" y="31" width="14" height="14" rx="3" fill="#e84a62"/><rect x="13" y="50" width="14" height="14" rx="3" fill="#9245d4"/><rect x="31" y="50" width="14" height="14" rx="3" fill="#3e9bf3"/><rect x="50" y="50" width="14" height="14" rx="3" fill="#5fd0aa"/></g></svg></span>
    <span class="di-wrap run"><svg class="di" viewBox="0 0 76 76"><rect width="76" height="76" rx="17" fill="#f8f8f5"/><path d="M38 38L12 23A30 30 0 0 1 64 23Z" fill="#d84c3b"/><path d="M38 38L64 23A30 30 0 0 1 38 68Z" fill="#f2bb3f"/><path d="M38 38L38 68A30 30 0 0 1 12 23Z" fill="#56a457"/><circle cx="38" cy="37" r="16" fill="#fff"/><circle cx="38" cy="37" r="12.500" fill="#4a7fe2"/></svg></span>
    <span class="di-wrap"><svg class="di" viewBox="0 0 76 76"><rect width="76" height="76" rx="17" fill="#f1f2f4"/><circle cx="38" cy="38" r="33" fill="#3a8ee6"/><circle cx="38" cy="38" r="28" fill="none" stroke="#cfe4f8" stroke-width="3" stroke-dasharray="1 3"/><path d="M60 18L42 42 34 34z" fill="#e5533d"/><path d="M16 58l18-24 8 8z" fill="#f2f2f2"/></svg></span>
    <span class="di-wrap run"><svg class="di"><use href="#d-mail"/></svg><b class="dock-badge dock-badge-wide">7,108</b></span>
    <span class="di-wrap"><svg class="di" viewBox="0 0 76 76"><rect width="76" height="76" rx="17" fill="#fbfbfb"/><path d="M0 24V17A17 17 0 0 1 17 0h42a17 17 0 0 1 17 17v7z" fill="#e0544a"/><text x="38" y="18" text-anchor="middle" class="svg-t" font-size="14" fill="#fff">JUL</text><text x="38" y="66" text-anchor="middle" class="svg-r" font-size="46" fill="#222">8</text></svg></span>
    <span class="di-wrap run"><svg class="di" viewBox="0 0 76 76"><rect width="76" height="76" rx="17" fill="#f1efe8"/><path d="M0 20V17A17 17 0 0 1 17 0h42a17 17 0 0 1 17 17v3z" fill="#f5cd4a"/><path d="M0 38h76M0 57h76" stroke="#dcdad2" stroke-width="1.500"/></svg></span>
    <span class="di-wrap run"><svg class="di" viewBox="0 0 76 76"><rect width="76" height="76" rx="17" fill="#3f8ef0"/><rect x="20" y="10" width="36" height="32" fill="#f7f7f7"/><circle cx="38" cy="24" r="7" fill="#e26d4a"/><path d="M38 24V17a7 7 0 0 1 7 7z" fill="#4caf50"/><path d="M38 42v20M29 64h18" stroke="#eee" stroke-width="3.500"/></svg></span>
    <span class="di-wrap"><svg class="di" viewBox="0 0 76 76"><rect width="76" height="76" rx="17" fill="#97999a"/><circle cx="38" cy="38" r="30" fill="#4b4e52"/><circle cx="38" cy="38" r="25" fill="none" stroke="#c7c9cb" stroke-width="4" stroke-dasharray="2 2"/><circle cx="38" cy="38" r="18" fill="#6a6d70"/><path d="M38 38V20M38 38L22 48M38 38l16 10" stroke="#d9dadb" stroke-width="4"/><circle cx="38" cy="38" r="5" fill="#d9dadb"/></svg><b class="dock-badge">1</b></span>
    <span class="di-wrap run"><svg class="di" viewBox="0 0 76 76"><circle cx="38" cy="38" r="39" fill="#5fd16d"/><g fill="none" stroke="#141414" stroke-linecap="round"><path d="M17 27c15-5 30-4 43 3" stroke-width="8"/><path d="M19 40c13-4 26-3 37 3" stroke-width="6.500"/><path d="M21 52c11-3 22-2 31 3" stroke-width="5.500"/></g></svg></span>
    <span class="di-wrap run"><svg class="di" viewBox="0 0 76 76"><rect width="76" height="76" rx="17" fill="#fff"/><rect x="26" y="12" width="38" height="52" fill="#2b7cd3"/><rect x="45" y="12" width="19" height="18" fill="#58a6e6"/><path d="M26 42h38v22H26z" fill="#7cbcee"/><rect x="12" y="24" width="26" height="28" rx="2" fill="#1b5fb4"/><text x="25" y="45" text-anchor="middle" class="svg-t" font-size="21" fill="#fff">O</text></svg></span>
    <span class="di-wrap"><svg class="di" viewBox="0 0 76 76"><rect width="76" height="76" rx="17" fill="#fff"/><rect x="26" y="12" width="38" height="52" fill="#2a8a55"/><rect x="45" y="12" width="19" height="26" fill="#5fbb83"/><path d="M26 38h19v26H26z" fill="#1f6b41"/><rect x="12" y="24" width="24" height="28" rx="2" fill="#17633a"/><text x="24" y="45" text-anchor="middle" class="svg-t" font-size="20" fill="#fff">X</text></svg></span>
    <span class="di-wrap run"><svg class="di" viewBox="0 0 76 76"><rect width="76" height="76" rx="17" fill="#5bd26a"/><svg x="14" y="11" width="48" height="55" viewBox="0 0 448 512" fill="#fff"><use href="#wa"/></svg></svg></span>
    <span class="di-wrap run"><svg class="di" viewBox="0 0 76 76"><rect width="76" height="76" rx="17" fill="#fff"/><rect x="26" y="12" width="38" height="52" fill="#2b6fd0"/><rect x="26" y="12" width="38" height="17" fill="#5aa2ec"/><rect x="26" y="47" width="38" height="17" fill="#1c4aa8"/><rect x="12" y="24" width="24" height="28" rx="2" fill="#1a4fb0"/><text x="24" y="45" text-anchor="middle" class="svg-t" font-size="19" fill="#fff">W</text></svg></span>
    <span class="di-wrap"><svg class="di" viewBox="0 0 76 76"><path d="M4 4l60-4 8 68-62 6z" fill="#fff"/><path d="M8 8l52-4 2 10-52 4z" fill="#000"/><path d="M10 20h54l2 50-54 2z" fill="#000"/><text x="38" y="61" text-anchor="middle" class="svg-t" font-size="38" fill="#fff">31</text></svg></span>
    <span class="di-wrap"><svg class="di di-over" viewBox="0 0 76 76"><circle cx="38" cy="38" r="37" fill="#fff"/><circle cx="38" cy="38" r="33" fill="#8e4a8f"/><circle cx="38" cy="38" r="22" fill="#fff"/></svg></span>
    <span class="di-wrap"><svg class="di" viewBox="0 0 76 76"><rect width="76" height="76" rx="17" fill="#c6c8bf"/><rect x="23" y="6" width="30" height="64" rx="5" fill="#1c2a33"/><path d="M26 9h24v34L26 60z" fill="#f1a48e"/><path d="M26 64V44L50 25v39z" fill="#0f5d78"/></svg></span>
    <span class="di-wrap"><svg class="di" viewBox="0 0 76 76"><rect width="76" height="76" rx="17" fill="#1d2230"/><path d="M21 14h17v20H21zM38 30h17v20H38zM21 46h17v20H21z" fill="#ef6a2a"/></svg></span>
    <span class="di-wrap"><svg class="di" viewBox="0 0 76 76"><rect width="76" height="76" rx="17" fill="#7a33a8"/><circle cx="38" cy="38" r="27" fill="#e9e3f0"/><path d="M22 20l8 6c5-2 11-2 16 0l8-6 2 13c2 8-2 17-11 19v13h-14V52c-9-2-13-11-11-19z" fill="#7a33a8"/></svg></span>
    <span class="di-wrap"><svg class="di" viewBox="0 0 76 76"><rect width="76" height="76" rx="17" fill="#fff"/><path d="M52 8l13 7v46l-13 7L25 43 14 52l-5-3V27l5-3 11 9zM52 26L37 38l15 12z" fill="#2a7cc9"/><path d="M52 8l13 7v46l-13 7z" fill="#3e9ce8"/></svg></span>
    <i class="dock-sep"></i>
    <span class="di-wrap run"><svg class="di" viewBox="0 0 76 76"><rect width="76" height="76" rx="17" fill="#a62716"/><path d="M36 12c6 0 3 18-4 32-6 12-15 22-18 19-3-4 8-14 26-19 10-3 25-3 25 3 0 5-14 1-23-12-6-9-11-23-6-23z" fill="none" stroke="#fff" stroke-width="3"/></svg></span>
    <span class="di-wrap run"><svg class="di" viewBox="0 0 76 76"><rect width="76" height="76" rx="17" fill="#fff"/><circle cx="45" cy="15" r="8" fill="#7b83eb"/><circle cx="60" cy="22" r="6" fill="#5059c9"/><rect x="32" y="24" width="26" height="38" rx="9" fill="#7b83eb"/><rect x="54" y="30" width="14" height="26" rx="6" fill="#5059c9"/><rect x="10" y="26" width="30" height="30" rx="2" fill="#4b53bc"/><text x="25" y="48" text-anchor="middle" class="svg-t" font-size="22" fill="#fff">T</text></svg><b class="dock-badge">2</b></span>
    <span class="di-wrap run"><svg class="di" viewBox="0 0 76 76"><rect width="76" height="76" rx="17" fill="#fff"/><circle cx="40" cy="38" r="27" fill="#ed6c47"/><path d="M40 11a27 27 0 0 1 27 27H40z" fill="#f2a07f"/><path d="M40 38h27a27 27 0 0 1-27 27z" fill="#c8553a"/><rect x="8" y="24" width="26" height="28" rx="2" fill="#c43e1c"/><text x="21" y="46" text-anchor="middle" class="svg-t" font-size="20" fill="#fff">P</text></svg></span>
    <i class="dock-sep"></i>
    <svg class="di di-doc" viewBox="0 0 76 86"><path d="M8 0h46l18 18v68H8z" fill="#f6f6f4"/><path d="M54 0l18 18H54z" fill="#222"/><path d="M14 24h44M14 29h44M14 34h44M14 39h44M14 44h44M14 52h44M14 57h44M14 62h44" stroke="#9a9a9a" stroke-width="2" stroke-dasharray="3 1"/><text x="40" y="80" text-anchor="middle" class="svg-r" font-size="13" fill="#777">PDF</text></svg>
    <span class="thumb"><i class="thumb-sheet thumb-side"></i><svg class="thumb-app" viewBox="0 0 76 76"><rect width="76" height="76" rx="17" fill="#fff"/><rect x="26" y="14" width="28" height="48" rx="9" fill="#5059c9"/><rect x="14" y="26" width="26" height="26" fill="#4b53bc"/></svg></span>
    <span class="thumb"><i class="thumb-sheet thumb-doc"></i><svg class="thumb-app" viewBox="0 0 76 76"><rect width="76" height="76" rx="17" fill="#a62716"/><path d="M36 14c6 0 3 18-4 30-6 12-13 20-16 18-3-4 8-13 24-18 10-3 22-2 22 3 0 4-12 1-20-12-6-9-10-21-6-21z" fill="none" stroke="#fff" stroke-width="3.500"/></svg></span>
    <span class="thumb"><i class="thumb-sheet"></i><svg class="thumb-app"><use href="#d-mail"/></svg></span>
    <span class="thumb"><i class="thumb-sheet"></i><svg class="thumb-app"><use href="#d-mail"/></svg></span>
    <span class="thumb"><i class="thumb-sheet thumb-dark"></i><svg class="thumb-app" viewBox="0 0 76 76"><rect width="76" height="76" rx="17" fill="#3f8ef0"/><rect x="24" y="12" width="28" height="26" fill="#f7f7f7"/><path d="M38 38v22M28 62h20" stroke="#eee" stroke-width="4"/></svg></span>
    <svg class="di di-trash" viewBox="0 0 76 86"><path d="M10 18h56l-6 64c-8 4-36 4-44 0z" fill="#d9dbd8"/><ellipse cx="38" cy="18" rx="28" ry="8" fill="#eee"/><path d="M20 20l8-16 8 14 8-16 8 14 6-8 2 12" fill="#a9acab" stroke="#666"/></svg>
  </footer>
</div>
</body>
</html>
```

FILE: styles.css
```css
* { box-sizing: border-box; }
html, body { margin: 0; padding: 0; }
body { width: 3420px; height: 2214px; overflow: hidden; font-family: Inter, "Liberation Sans", sans-serif; color: #111827; }
.defs { position: absolute; }
.svg-t { font-family: Inter, sans-serif; font-weight: 700; }
.svg-r { font-family: Inter, sans-serif; font-weight: 400; }

.desktop { position: relative; width: 3420px; height: 2214px; overflow: hidden; display: flex; flex-direction: column; background: #2b3316; }
.wall { position: absolute; inset: 0; background: linear-gradient(90deg, #5471a6, #7d97c9) 0 0 / 100% 100px no-repeat, linear-gradient(180deg, #5f7eb4 0, #5a79af 450px, #232f4a 800px, #1f2812 1300px, #3a4320 2060px, #3a4320 2214px); }
.wall-noise { position: absolute; left: 0; top: 514px; -webkit-mask-image: linear-gradient(180deg, transparent, #000 300px); mask-image: linear-gradient(180deg, transparent, #000 300px); }

/* menu bar */
.menubar { position: relative; flex: none; height: 76px; display: flex; justify-content: space-between; align-items: center; background: linear-gradient(90deg, #486899, #6080b4); color: #fff; padding: 0 33px 0 41px; }
.menu-left { display: flex; align-items: center; gap: 40.600px; }
.apple { width: 27px; height: 32px; margin-top: -4px; }
.menu-item { font-size: 25.100px; font-weight: 500; color: #fff; }
.menu-app { font-weight: 700; letter-spacing: .3px; }
.menu-right { display: flex; align-items: center; gap: 36px; }
.mi { width: 32px; height: 32px; }
.menu-pct { font-size: 22.500px; font-weight: 500; margin-right: -26px; }
.batt { width: 52px; height: 26px; }
.wifi { width: 37px; height: 30px; }
.menu-clock { font-size: 26.400px; font-weight: 500; margin-left: -3px; white-space: nowrap; }

/* window */
.window { position: relative; flex: none; margin: 16px 0 0 16px; width: 3402px; height: 1976px; border-radius: 20px 20px 14px 14px; overflow: hidden; display: flex; flex-direction: column; background: #fff; }
.tabstrip { flex: none; height: 80px; background: #d3e8c3; display: flex; align-items: flex-end; }
.lights { flex: none; width: 178px; height: 68px; padding: 0 0 12px 42px; display: flex; align-items: center; gap: 15.500px; }
.light { width: 24px; height: 24px; border-radius: 50%; }
.red { background: #ee6b5f; }
.amber { background: #f5be4f; }
.green { background: #62c554; }
.tab { position: relative; flex: 0 0 214px; height: 68px; padding: 0 0 12px 22px; display: flex; align-items: center; }
.tab::after { content: ""; position: absolute; right: 0; top: 12px; width: 3px; height: 32px; background: #fff; border-radius: 2px; }
.tab-nosep::after { display: none; }
.fav { flex: none; width: 32px; height: 32px; }
.tab-title { flex: none; width: 70px; margin-left: 16px; font-size: 24px; color: #1f1f1f; white-space: nowrap; overflow: hidden; -webkit-mask-image: linear-gradient(90deg, #000 65%, transparent 100%); mask-image: linear-gradient(90deg, #000 65%, transparent 100%); }
.tab-x { flex: none; width: 16px; height: 16px; margin-left: 28px; }
.tab-active { flex-basis: 200px; margin-left: 6px; padding-left: 18px; background: #fff; border-radius: 20px 20px 0 0; }
.tab-active .tab-x { margin-left: 25px; }
.tab-active::before, .tab-active::after { content: ""; position: absolute; top: auto; bottom: 0; width: 20px; height: 20px; border-radius: 0; }
.tab-active::before { left: -20px; background: radial-gradient(circle at 0 0, #d3e8c3 19.500px, #fff 20px); }
.tab-active::after { right: -20px; background: radial-gradient(circle at 100% 0, #d3e8c3 19.500px, #fff 20px); }
.tab-next { flex-basis: 216px; padding-left: 30px; }
.tab-plus { flex: none; width: 20px; height: 20px; margin: 0 0 30px 22px; }
.tab-menu { flex: none; width: 54px; height: 56px; margin: 0 11px 12px auto; background: #fff; border-radius: 28px; display: flex; align-items: center; justify-content: center; }
.tab-menu-chev { width: 16px; height: 16px; }

.toolbar { flex: none; height: 80px; padding: 12px 0 0 33px; display: flex; align-items: center; background: #fff; }
.tb-icon { flex: none; width: 24px; height: 24px; }
.tb-fwd { margin-left: 47px; }
.tb-reload { margin-left: 49px; }
.omnibox { flex: none; width: 2887px; height: 68px; margin-left: 39px; border-radius: 34px; background: #e0e0e0; display: flex; align-items: center; padding: 0 32px 0 11px; }
.site-info { flex: none; width: 47px; height: 48px; border-radius: 50%; background: #fff; display: flex; align-items: center; justify-content: center; }
.site-icon { width: 24px; height: 24px; }
.url { margin-left: 16px; font-size: 28px; color: #1f1f1f; white-space: nowrap; }
.url-path { color: #5f6368; }
.star { width: 32px; height: 32px; margin-left: auto; }
.tb-ext { flex: none; width: 30px; height: 30px; margin-left: 37px; }
.tb-div { flex: none; width: 2px; height: 34px; margin-left: 40px; background: #d3e8c3; }
.avatar { flex: none; width: 40px; height: 40px; margin-left: 32px; }
.tb-dots { flex: none; width: 6px; height: 24px; margin-left: 48px; }

.bookmarks { flex: none; height: 82px; padding: 0 0 2px 38px; display: flex; align-items: center; background: #fff; border-bottom: 2px solid #d6d6d6; }
.bm-apps { flex: none; width: 28px; height: 28px; }
.bm-div { flex: none; width: 2px; height: 32px; margin-left: 31px; background: #d3e8c3; }
.bm-list { flex: none; margin-left: 30px; display: flex; align-items: center; gap: 33.600px; }
.bm { display: flex; align-items: center; gap: 12px; font-size: 23.500px; color: #1f1f1f; white-space: nowrap; }
.bm-i { flex: none; width: 32px; height: 32px; }
.bm-more { flex: none; width: 20px; height: 20px; margin-left: auto; margin-right: 62px; }

/* page */
.viewport { flex: 1; min-height: 0; display: flex; }
.page { position: relative; flex: none; width: 3387px; overflow: hidden; display: flex; flex-direction: column; background: #f9f5f4; }
.scrollbar { flex: 1; position: relative; background: #f7f5f4; padding-top: 85px; }
.scroll-thumb { display: block; width: 15px; height: 221px; border-radius: 8px; background: #929292; }

.topnav { position: relative; z-index: 2; flex: none; height: 160px; padding: 24px 189px 24px 190px; display: flex; align-items: center; background: #111827; box-shadow: 0 8px 28px rgba(0, 0, 0, .16); }
.brand { display: flex; align-items: center; gap: 24px; margin-right: auto; }
.logo { width: 112px; height: 112px; border-radius: 14px; background: #fff; }
.logo-svg { display: block; width: 112px; height: 112px; }
.logo-t { font-family: Inter, sans-serif; font-weight: 800; font-size: 23px; fill: #e6a925; stroke: #111; stroke-width: 4px; paint-order: stroke; }
.brand-name { font-family: Inter, sans-serif; font-size: 48px; font-weight: 800; color: #fff; letter-spacing: -.5px; }
.nav-links { display: flex; align-items: center; gap: 16px; }
.nav-link { height: 80px; padding: 0 32px; display: flex; align-items: center; gap: 16px; font-size: 31.500px; color: #f3f4f6; border-radius: 12px; white-space: nowrap; }
.nav-link .nav-i { fill: #d1d5db; color: #d1d5db; }
.nav-i { flex: none; width: 32px; height: 32px; }
.nav-i-home { width: 36px; }
.nav-i-users { width: 40px; }
.nav-active { background: #fff; color: #111827; }
.nav-active .nav-i { fill: #111827; color: #111827; }
.nav-div { flex: none; width: 2px; height: 80px; margin: 0 16px 0 40px; background: #374151; }
.lang { flex: none; width: 280px; height: 80px; padding: 8px; border-radius: 40px; background: #f3f4f6; display: flex; align-items: center; }
.lang-opt { height: 64px; padding: 0 16px 0 24px; display: flex; align-items: center; gap: 8px; font-size: 28px; font-weight: 400; color: #6b7280; border-radius: 32px; }
.lang-on { width: 131px; background: #111827; color: #e5e7eb; font-weight: 500; }
.flag { flex: none; width: 40px; height: 30px; }

.content { flex: none; padding: 0; margin: 0 0 0 190px; width: 3008px; }
.filters { background: #fff; border-radius: 0 0 16px 16px; box-shadow: 0 4px 10px rgba(0, 0, 0, .09); padding: 29px 48px 48px; }
.filter-grid { display: grid; grid-template-columns: repeat(3, 1fr); gap: 32px; align-items: start; }
.field { display: block; }
.field-label { display: block; height: 40px; line-height: 40px; margin-bottom: 7px; font-size: 27.500px; font-weight: 500; color: #374151; }
.search-wrap, .select-wrap { position: relative; display: block; }
.search { display: block; width: 100%; height: 83px; padding: 0 24px 0 80px; border: 2px solid #d1d5db; border-radius: 12px; font: 400 30.500px Inter, sans-serif; color: #111827; background: #fff; outline: none; }
.search::placeholder { color: #9ca3af; opacity: 1; }
.search-i { position: absolute; left: 24px; top: 26px; width: 32px; height: 32px; fill: #9ca3af; }
.select { display: block; width: 100%; height: 77px; padding: 0 40px 0 24px; border: 2px solid #d1d5db; border-radius: 12px; font: 400 30.500px Inter, sans-serif; color: #111827; background: #fff; appearance: none; -webkit-appearance: none; }
.select-chev { position: absolute; right: 8px; top: 29px; width: 18px; height: 18px; }
.filter-actions { display: flex; justify-content: flex-end; margin-top: 33px; }
.apply { height: 80px; padding: 0 32px; display: flex; align-items: center; gap: 16px; border: 0; border-radius: 12px; background: #111827; color: #fff; font: 500 31.700px Inter, sans-serif; }
.apply-i { width: 32px; height: 32px; fill: #fff; }

.results-bar { display: flex; justify-content: space-between; align-items: center; margin-top: 64px; height: 77px; }
.results-count { margin: 0; font-size: 30.600px; color: #4b5563; }
.results-count b { font-weight: 700; }
.sort { display: flex; align-items: center; gap: 18px; }
.sort-label { font-size: 30.600px; color: #4b5563; }
.sort-wrap { width: 336px; }
.sort-chev { right: 9px; }

.cards { display: grid; grid-template-columns: repeat(3, 1fr); gap: 48px; margin-top: 49px; }
.card { background: #fff; border-radius: 16px; overflow: hidden; box-shadow: 0 1px 3px rgba(0, 0, 0, .04); }
.card-img { position: relative; height: 352px; background: #1a1a1a; display: flex; align-items: center; justify-content: center; padding: 0 4px 10px 0; }
.img-title { font-family: Lato, sans-serif; font-size: 64px; font-weight: 600; color: #fff; white-space: nowrap; }
.badge { position: absolute; left: 16px; top: 16px; height: 48px; line-height: 50px; padding: 0 16px; border-radius: 8px; background: #0a0a0a; color: #fff; font-size: 23.700px; }
.card-body { padding: 24px; }
.card-title { margin: 0 0 16px 1px; font-size: 35.500px; line-height: 56px; font-weight: 600; color: #111827; }
.meta { display: grid; grid-template-columns: 1fr 1fr; gap: 8px; }
.meta-item { height: 40px; display: flex; align-items: center; gap: 13px; font-size: 27.500px; color: #4b5563; }
.meta-i { flex: none; width: 26px; height: 28px; fill: #4b5563; }
.desc { margin: 25px 0 23px; font-size: 27.300px; line-height: 40px; color: #4b5563; }
.card-actions { display: flex; justify-content: flex-end; align-items: center; gap: 40px; }
.save { display: flex; align-items: center; gap: 16px; font-size: 27px; font-weight: 500; color: #6b7280; }
.save-i { width: 30px; height: 28px; }
.more { height: 72px; padding: 0 24px; border: 0; border-radius: 12px; background: #111827; color: #fff; font: 500 27.500px Inter, sans-serif; }

.fabs { position: absolute; right: 40px; bottom: 39px; display: flex; flex-direction: column; align-items: flex-end; gap: 24px; }
.fab { display: flex; align-items: center; justify-content: center; border-radius: 50%; box-shadow: 0 8px 20px rgba(0, 0, 0, .15); }
.fab-wa { width: 83px; height: 104px; background: #5ac46b; }
.fab-wa-i { width: 36px; height: 36px; fill: #fff; }
.fab-up { width: 72px; height: 96px; background: #f0cb46; }
.fab-up-i { width: 24px; height: 28px; }
.page-fade { position: absolute; left: 0; right: 0; bottom: 0; height: 40px; background: linear-gradient(180deg, transparent, rgba(60, 50, 50, .08)); pointer-events: none; }
.status { position: absolute; left: 0; bottom: 0; width: 1124px; height: 41px; line-height: 40px; padding-left: 10px; font-size: 24.300px; color: #1f1f1f; white-space: nowrap; background: linear-gradient(90deg, #d2e6c2, #c6dab6); border-radius: 0 10px 0 0; box-shadow: 0 -1px 2px rgba(0, 0, 0, .2); }

/* dock */
.dock { position: absolute; left: 87px; top: 2078px; width: 3246px; height: 125px; padding: 17px 0 0 18px; display: flex; align-items: flex-start; gap: 28.630px; border: 2px solid rgba(255, 255, 255, .16); border-radius: 40px; background: linear-gradient(90deg, #6e7459, #8a9060); }
.di { flex: none; display: block; width: 76px; height: 76px; overflow: visible; }
.di-wrap { position: relative; flex: none; display: block; width: 76px; height: 76px; }
.run::after { content: ""; position: absolute; left: 35px; top: 96px; width: 6px; height: 6px; border-radius: 50%; background: #000; }
.di-over { width: 92px; height: 92px; margin: -8px; }
.dock-badge { position: absolute; right: -13px; top: -10px; min-width: 37px; height: 38px; padding: 0 3px; line-height: 38px; border-radius: 50%; background: #dc4b3e; color: #fff; font-size: 18px; font-weight: 400; text-align: center; }
.dock-badge-wide { right: -12px; min-width: 55px; }
.dock-sep { flex: none; width: 2px; height: 94px; margin: 0 8.500px; background: #4a4e38; }
.di-doc { height: 86px; margin-top: -2px; }
.di-trash { height: 86px; margin-top: -6px; }
.thumb { position: relative; flex: none; display: block; width: 76px; height: 76px; }
.thumb-sheet { position: absolute; left: -7px; top: 10px; width: 90px; height: 55px; background: #f7f7f7; box-shadow: 0 1px 2px rgba(0, 0, 0, .3); }
.thumb-side { background: linear-gradient(90deg, #e6e6e6 16%, #fff 16%); }
.thumb-doc { background: linear-gradient(180deg, #f4f4f4 0 30%, #bdbdbd 30% 34%, #f4f4f4 34% 62%, #3a3a3a 62% 74%, #f4f4f4 74%); }
.thumb-dark { background: #1c1f1f; border: 4px solid #ddd; border-left-width: 8px; border-left-color: #222; }
.thumb-app { position: absolute; right: -5px; top: 52px; width: 30px; height: 30px; }
```
